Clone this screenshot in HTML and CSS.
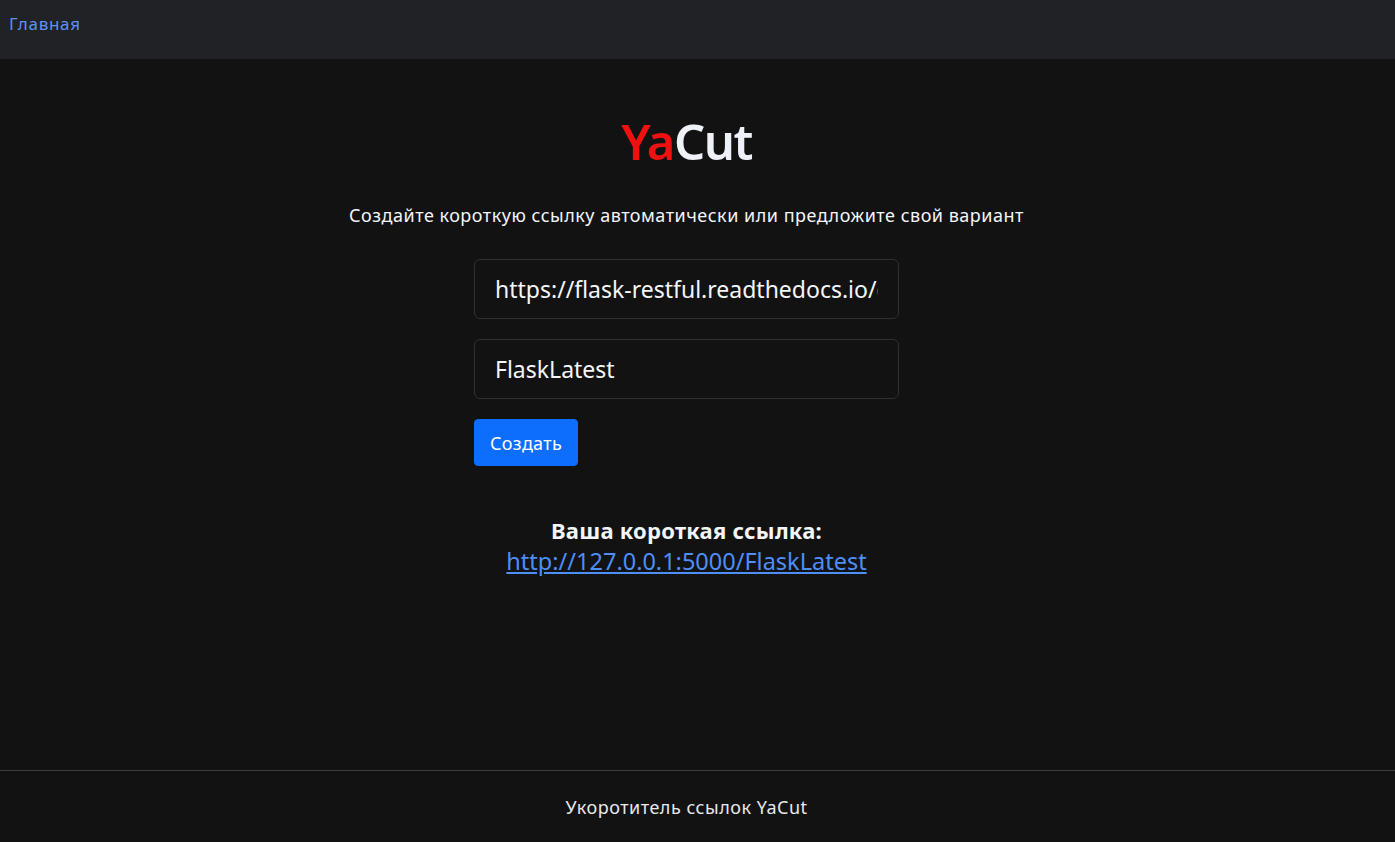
FILE: index.html
```html
<!DOCTYPE html>
<html lang="ru">
<head>
<meta charset="utf-8">
<title>YaCut</title>
<link rel="stylesheet" href="styles.css">
</head>
<body>
<div class="page">
  <nav class="navbar"><a class="nav-link" href="#">Главная</a></nav>
  <main class="main">
    <h1 class="logo"><span class="ya">Ya</span>Cut</h1>
    <p class="lead">Создайте короткую ссылку автоматически или предложите свой вариант</p>
    <form class="form">
      <input class="field" type="text" value="https://flask-restful.readthedocs.io/en/latest/">
      <input class="field" type="text" value="FlaskLatest">
      <div class="actions"><button class="btn" type="button">Создать</button></div>
    </form>
    <div class="result">
      <h5 class="result-title">Ваша короткая ссылка:</h5>
      <a class="result-link" href="#">http://127.0.0.1:5000/FlaskLatest</a>
    </div>
  </main>
  <footer class="footer">Укоротитель ссылок YaCut</footer>
</div>
</body>
</html>
```
FILE: styles.css
```css
* { box-sizing: border-box; }
html, body { margin: 0; height: 100%; }
body {
  background: #121212;
  color: #dee2e6;
  font-family: "Noto Sans", "Open Sans", sans-serif;
  font-size: 16px;
}
.page { min-height: 100%; display: flex; flex-direction: column; }
.navbar {
  height: 59px;
  background: #212225;
  display: flex;
  align-items: flex-start;
  padding: 12px 9px 0;
}
.nav-link { color: #5f90f2; text-decoration: none; font-size: 17px; line-height: 24px; letter-spacing: 0.7px; }
.main {
  flex: 1;
  display: flex;
  flex-direction: column;
  align-items: center;
  padding: 50px 22px 0 0;
}
.logo {
  margin: 0;
  font-size: 49px;
  font-weight: 600;
  line-height: 64px;
  color: #eef2f8;
  letter-spacing: -1.5px;
}
.ya { color: #f01010; }
.lead { margin: 30px 0 0; font-size: 18px; letter-spacing: 0.5px; color: #f3f5f8; line-height: 24px; }
.form {
  width: 425px;
  margin-top: 32px;
  display: flex;
  flex-direction: column;
  gap: 20px;
}
.field {
  height: 60px;
  width: 100%;
  background: #121212;
  border: 1px solid #2e3034;
  border-radius: 6px;
  color: #f4f6f9;
  font-family: inherit;
  font-size: 23px;
  padding: 0 20px;
  outline: none;
}
.btn {
  background: #0d6efd;
  border: 1px solid #0d6efd;
  border-radius: 4px;
  color: #fff;
  font-family: inherit;
  font-size: 18px;
  letter-spacing: 0.3px;
  height: 47px;
  padding: 0 15px;
}
.result { margin-top: 49px; text-align: center; }
.result-title { margin: 0; font-size: 22px; letter-spacing: 0.25px; font-weight: 700; color: #f3f5f8; line-height: 30px; }
.result-link { color: #4d8ef7; font-size: 23.5px; line-height: 32px; text-decoration: underline; }
.footer {
  border-top: 1px solid #3b3d40;
  height: 72px;
  display: flex;
  align-items: center;
  justify-content: center;
  padding-right: 22px;
  font-size: 18px;
  letter-spacing: 0.5px;
  color: #e7e9ec;
}
```
